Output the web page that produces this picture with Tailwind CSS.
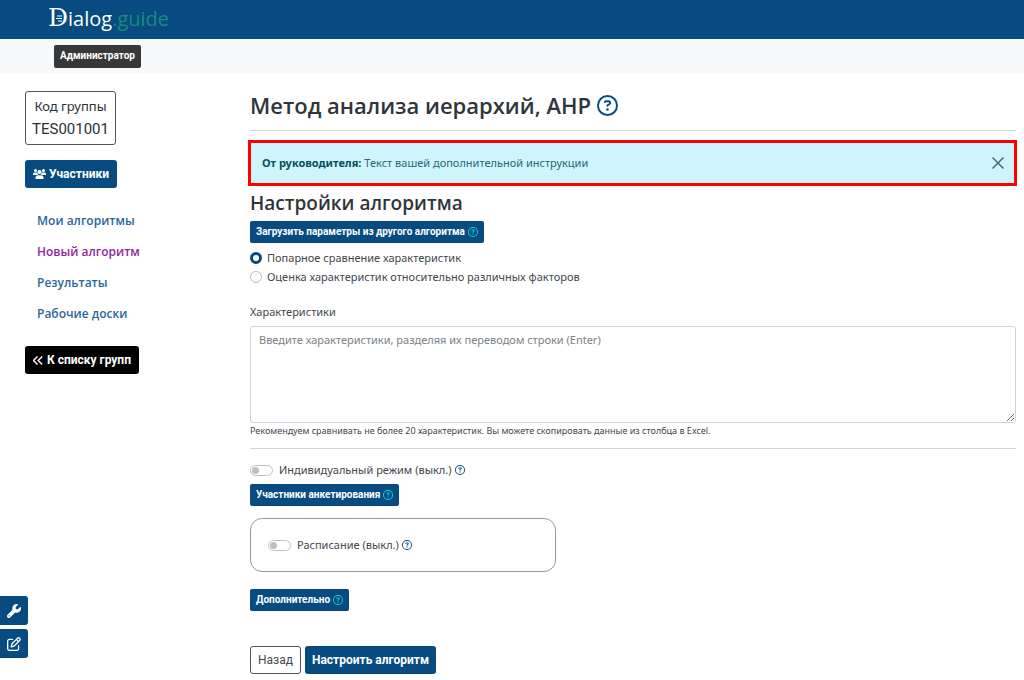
<!DOCTYPE html>
<html lang="ru">
<head>
<meta charset="utf-8">
<meta name="viewport" content="width=device-width, initial-scale=1">
<title>Dialog.guide</title>
<script src="https://cdn.jsdelivr.net/npm/@tailwindcss/browser@4"></script>
</head>
<body class="min-h-screen bg-white font-['Noto_Sans','Open_Sans',sans-serif] text-[11px] leading-4 text-[#42474c]">
<svg class="hidden" aria-hidden="true">
  <symbol id="help" viewBox="0 0 512 512"><path fill="currentColor" d="M464 256A208 208 0 1 0 48 256a208 208 0 1 0 416 0zM0 256a256 256 0 1 1 512 0A256 256 0 1 1 0 256zm169.8-90.7c7.9-22.3 29.1-37.3 52.8-37.3h58.3c34.9 0 63.1 28.3 63.1 63.1c0 22.6-12.1 43.5-31.7 54.8L280 264.4c-.2 13-10.9 23.6-24 23.6c-13.3 0-24-10.7-24-24V250.5c0-8.6 4.6-16.5 12.1-20.8l44.3-25.4c4.7-2.7 7.6-7.7 7.6-13.1c0-8.4-6.8-15.1-15.1-15.1H222.6c-3.4 0-6.4 2.1-7.5 5.3l-.4 1.2c-4.4 12.5-18.2 19-30.6 14.6s-19-18.2-14.6-30.6l.4-1.2zM224 352a32 32 0 1 1 64 0 32 32 0 1 1 -64 0z"/></symbol>
</svg>
<header class="flex h-[39px] items-center bg-[#084b80] px-12 pb-[2px]">
  <a href="#" class="flex items-baseline font-['Open_Sans',sans-serif] text-[20px] leading-6 text-white">
    <span class="relative font-['DejaVu_Serif',serif] text-[25px]">D<svg class="absolute top-[9px] left-[8px] h-[7px] w-[7px]" viewBox="0 0 7 7" fill="none" stroke="#fff"><path d="M1 1h5M0 3.500h6M2 6h4"/></svg></span><span>ialog</span><span class="text-[#158b82]">.guide</span>
  </a>
</header>
<div class="flex h-[34px] items-center bg-[#f8f9fa] px-[54px]">
  <button class="h-[23px] rounded-xs bg-[#383838] px-[6px] font-['Roboto',sans-serif] text-[10px] font-bold text-white">Администратор</button>
</div>
<div class="flex pr-2">
  <aside class="flex w-[250px] shrink-0 flex-col items-start pt-[18px] pl-[25px]">
    <div class="rounded-[3px] border border-[#555] px-[6px] py-[3px] text-center text-[#2b3035]">
      <div class="text-[13px] leading-[23px]">Код группы</div>
      <div class="font-['Roboto',sans-serif] text-[15px] leading-[23px]">TES001001</div>
    </div>
    <button class="mt-[15px] flex h-7 items-center gap-[3px] rounded-[3px] bg-[#084b80] px-2 font-['Roboto',sans-serif] text-[12px] font-bold text-white">
      <svg class="h-3 w-[13px]" viewBox="0 0 26 24" fill="currentColor"><circle cx="5" cy="5" r="3"/><circle cx="21" cy="5" r="3"/><circle cx="13" cy="8" r="4.200"/><path d="M0 14v-2q0-3 3-3h4q1 0 1.500.5Q9 13 11 14zM26 14v-2q0-3-3-3h-4q-1 0-1.500.5Q17 13 15 14zM5 22v-2.500q0-5 5-5h6q5 0 5 5V22z"/></svg>
      <span>Участники</span>
    </button>
    <nav class="mt-[17px] ml-3 flex flex-col items-start font-['Open_Sans',sans-serif] text-[12px] leading-[31px] font-semibold text-[#2a669b]">
      <a href="#">Мои алгоритмы</a>
      <a href="#" class="text-[#9226a2]">Новый алгоритм</a>
      <a href="#">Результаты</a>
      <a href="#">Рабочие доски</a>
    </nav>
    <button class="mt-[17px] flex h-7 items-center gap-1 rounded-[3px] bg-black px-2 font-['Roboto',sans-serif] text-[12px] font-bold text-white">
      <svg class="h-[9px] w-[10px]" viewBox="0 0 10 9" fill="none" stroke="currentColor" stroke-width="1.400"><path d="M4.500.5l-4 4 4 4M9.200.5l-4 4 4 4"/></svg>
      <span>К списку групп</span>
    </button>
  </aside>
  <main class="min-w-0 flex-1">
    <h1 class="mt-[15px] flex h-[34px] items-center gap-[6px] font-['Open_Sans',sans-serif] text-[22px] font-semibold text-[#30353a]"><span>Метод анализа иерархий, AHP</span><svg class="mt-px size-[21px] text-[#084b80]"><use href="#help"/></svg></h1>
    <hr class="mt-2 border-[#d3d4d5]">
    <div class="-mr-px -ml-[2px] mt-[9px] flex h-[46px] items-center justify-between border-3 border-[#ff0000] bg-[#cff4fc] pr-[10px] pl-[11px] text-[#2a6774]">
      <p><b class="text-[#055160]">От руководителя:</b> Текст вашей дополнительной инструкции</p>
      <button aria-label="Закрыть"><svg class="size-3 text-[#4c6a70]" viewBox="0 0 12 12" fill="none" stroke="currentColor" stroke-width="1.500"><path d="M.5.5l11 11M11.500.5l-11 11"/></svg></button>
    </div>
    <h2 class="mt-[2px] font-['Open_Sans',sans-serif] text-[19px] leading-[30px] font-semibold text-[#30353a]">Настройки алгоритма</h2>
    <button class="mt-[3px] flex h-[22px] items-center gap-[3px] rounded-xs bg-[#084b80] px-[6px] font-['Roboto',sans-serif] text-[10px] font-bold text-white"><span>Загрузить параметры из другого алгоритма</span><svg class="size-[10px] text-[#0dd]"><use href="#help"/></svg></button>
    <div class="mt-[7px] flex flex-col gap-[3px]">
      <label class="flex items-center gap-[5px]"><input type="radio" name="mode" checked class="size-3 appearance-none rounded-full border border-[#bfbfbf] checked:border-[3px] checked:border-[#084b80]">Попарное сравнение характеристик</label>
      <label class="flex items-center gap-[5px]"><input type="radio" name="mode" class="size-3 appearance-none rounded-full border border-[#bfbfbf] checked:border-[3px] checked:border-[#084b80]">Оценка характеристик относительно различных факторов</label>
    </div>
    <label for="traits" class="mt-[19px] block">Характеристики</label>
    <textarea id="traits" placeholder="Введите характеристики, разделяя их переводом строки (Enter)" class="mt-[6px] block h-[97px] w-full resize rounded-[3px] border border-[#ced4da] px-2 py-[5px] placeholder:text-[#7a8289]"></textarea>
    <p class="text-[9px]">Рекомендуем сравнивать не более 20 характеристик. Вы можете скопировать данные из столбца в Excel.</p>
    <hr class="mt-[9px] border-[#d3d4d5]">
    <div class="mt-[13px] flex items-center gap-[3px]">
      <label class="flex items-center gap-[6px]"><input type="checkbox" role="switch" class="h-[11px] w-[23px] appearance-none rounded-full border border-[#bfbfbf] before:m-px before:block before:size-[7px] before:rounded-full before:bg-[#bfbfbf]">Индивидуальный режим (выкл.)</label>
      <svg class="size-[10px] text-[#084b80]"><use href="#help"/></svg>
    </div>
    <button class="mt-[6px] flex h-[22px] items-center gap-[3px] rounded-xs bg-[#084b80] px-[6px] font-['Roboto',sans-serif] text-[10px] font-bold text-white"><span>Участники анкетирования</span><svg class="size-[10px] text-[#0dd]"><use href="#help"/></svg></button>
    <section class="mt-3 flex h-[54px] w-2/5 items-center gap-[3px] rounded-xl border border-[#999] px-[17px]">
      <label class="flex items-center gap-[6px]"><input type="checkbox" role="switch" class="h-[11px] w-[23px] appearance-none rounded-full border border-[#bfbfbf] before:m-px before:block before:size-[7px] before:rounded-full before:bg-[#bfbfbf]">Расписание (выкл.)</label>
      <svg class="size-[10px] text-[#084b80]"><use href="#help"/></svg>
    </section>
    <button class="mt-[17px] flex h-[22px] items-center gap-[3px] rounded-xs bg-[#084b80] px-[6px] font-['Roboto',sans-serif] text-[10px] font-bold text-white"><span>Дополнительно</span><svg class="size-[10px] text-[#0dd]"><use href="#help"/></svg></button>
    <div class="mt-[35px] flex gap-1 font-['Roboto',sans-serif] text-[12px]">
      <button class="h-7 rounded-[3px] border border-[#555] px-[7px]">Назад</button>
      <button class="h-7 rounded-[3px] bg-[#084b80] px-[7px] font-bold text-white">Настроить алгоритм</button>
    </div>
  </main>
</div>
<div class="fixed bottom-[22px] left-0 flex flex-col gap-1">
  <button aria-label="Настройки" class="flex h-[29px] w-7 items-center justify-center rounded-r-[3px] bg-[#084b80] text-white"><svg class="size-[14px]" viewBox="0 0 512 512" fill="currentColor"><path d="M352 320c88.4 0 160-71.6 160-160c0-15.3-2.2-30.1-6.2-44.2c-3.1-10.8-16.4-13.2-24.3-5.3l-76.8 76.8c-3 3-7.1 4.7-11.3 4.7H336c-8.8 0-16-7.2-16-16V118.600c0-4.200 1.700-8.300 4.700-11.300l76.800-76.800c7.900-7.900 5.400-21.200-5.300-24.300C382.100 2.200 367.300 0 352 0C263.600 0 192 71.600 192 160c0 19.100 3.400 37.500 9.500 54.500L19.900 396.100C7.200 408.800 0 426.100 0 444.100C0 481.600 30.400 512 67.900 512c18 0 35.300-7.200 48-19.900L297.500 310.500c17 6.200 35.400 9.500 54.500 9.500zM80 408a24 24 0 1 1 0 48 24 24 0 1 1 0-48z"/></svg></button>
  <button aria-label="Редактировать" class="flex h-[29px] w-7 items-center justify-center rounded-r-[3px] bg-[#084b80] text-white"><svg class="size-[14px]" viewBox="0 0 512 512" fill="currentColor"><path d="M441 58.900L453.100 71c9.400 9.400 9.400 24.600 0 33.900L424 134.100 377.900 88 407 58.900c9.400-9.400 24.600-9.400 33.900 0zM209.800 256.200L344 121.900 390.100 168 255.800 302.200c-2.900 2.900-6.500 5-10.400 6.100l-58.500 16.700 16.700-58.500c1.100-3.900 3.200-7.500 6.100-10.400zM373.100 25L175.800 222.200c-8.700 8.700-15 19.400-18.300 31.100l-28.600 100c-2.400 8.400-.1 17.400 6.100 23.600s15.200 8.500 23.600 6.100l100-28.600c11.800-3.400 22.500-9.700 31.100-18.300L487 138.900c28.100-28.100 28.100-73.700 0-101.800L474.900 25C446.800-3.100 401.200-3.100 373.100 25zM88 64C39.400 64 0 103.400 0 152V424c0 48.600 39.400 88 88 88H360c48.600 0 88-39.400 88-88V312c0-13.300-10.700-24-24-24s-24 10.700-24 24V424c0 22.100-17.900 40-40 40H88c-22.100 0-40-17.900-40-40V152c0-22.100 17.900-40 40-40H200c13.300 0 24-10.700 24-24s-10.700-24-24-24H88z"/></svg></button>
</div>
</body>
</html>
